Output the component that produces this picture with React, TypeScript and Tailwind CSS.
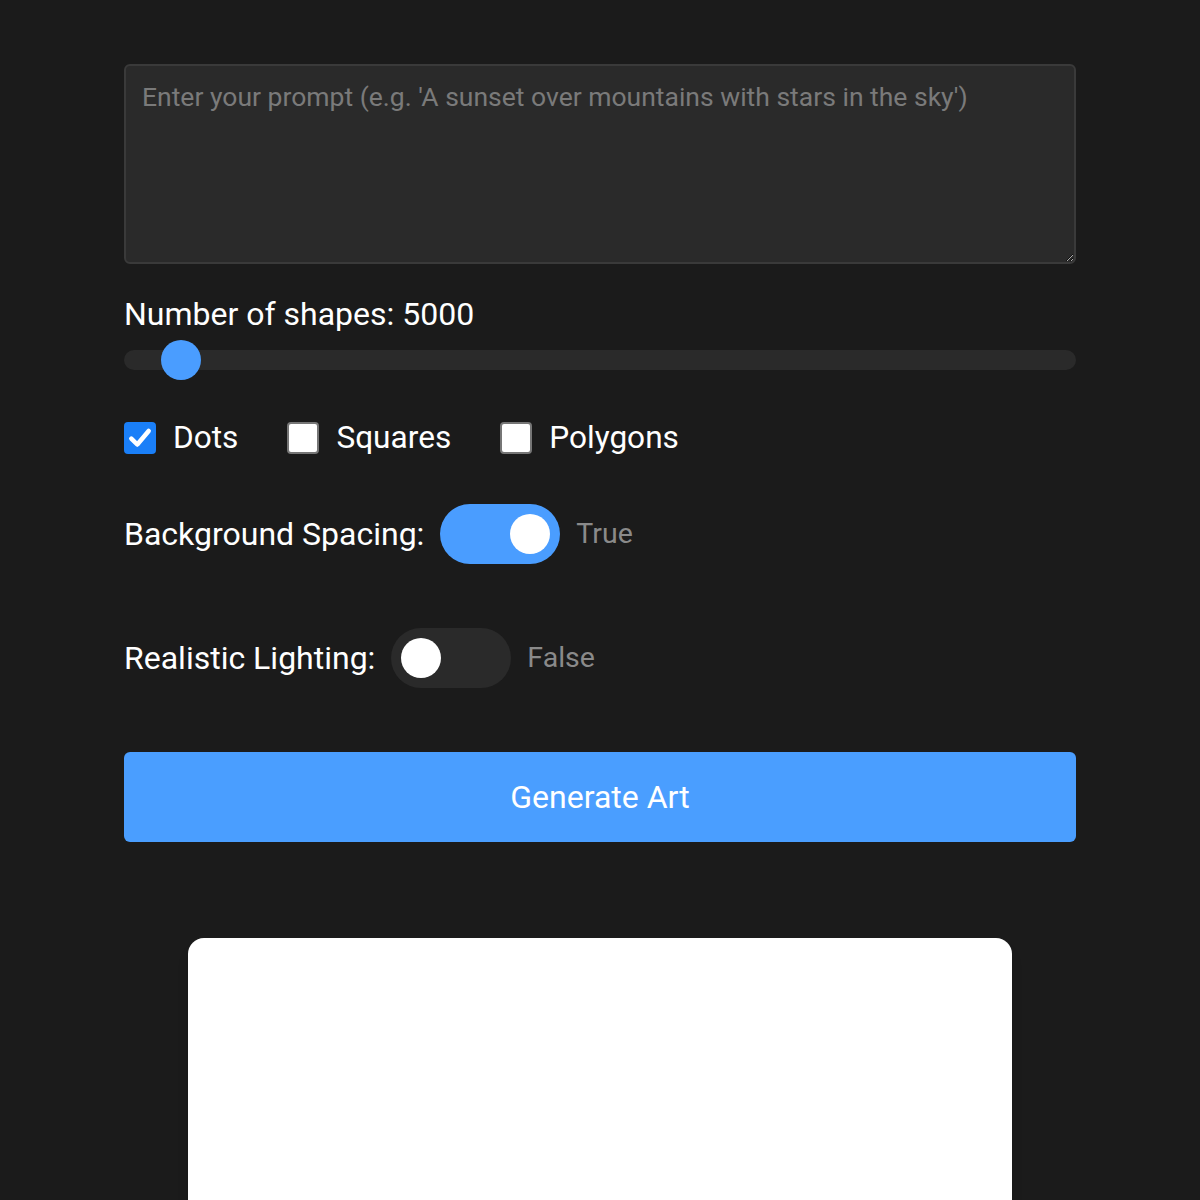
import React, { useState } from 'react';

const font = { fontFamily: 'Roboto, "Liberation Sans", sans-serif' };

const Check = ({ checked, label }: { checked: boolean; label: string }) => (
    <label className="flex items-center gap-[17px]">
        {checked ? (
            <span className="w-8 h-8 rounded-[4px] bg-[#1a7ff8] flex items-center justify-center">
                <svg width="26" height="26" viewBox="0 0 24 24" fill="none">
                    <path d="M4 12.5 L9.5 18 L20 5.5" stroke="white" strokeWidth="4.2" strokeLinecap="round" strokeLinejoin="round" />
                </svg>
            </span>
        ) : (
            <span className="w-8 h-8 rounded-[4px] bg-white border-2 border-[#767676]" />
        )}
        <span className="text-[31.6px] text-white leading-none">{label}</span>
    </label>
);

const Toggle = ({ label, on }: { label: string; on: boolean }) => (
    <div className="flex items-center">
        <span className="text-[32px] text-white">{label}</span>
        <div className={`ml-4 w-[120px] h-[60px] rounded-full flex items-center px-[10px] ${on ? 'bg-[#4a9dff] justify-end' : 'bg-[#2a2a2a] justify-start'}`}>
            <span className="w-10 h-10 rounded-full bg-white" />
        </div>
        <span className="ml-4 text-[28.5px] text-[#8a8a8a]">{on ? 'True' : 'False'}</span>
    </div>
);

export default function App() {
    const [shapes] = useState(5000);
    const pct = (shapes - 1000) / 99000;

    return (
        <div className="min-h-[1200px] bg-[#1b1b1b] overflow-hidden" style={font}>
            <div className="w-[952px] mx-auto pt-16 flex flex-col">
                <textarea
                    className="w-full h-[200px] bg-[#2a2a2a] border-2 border-[#3a3a3a] rounded-md px-4 py-[11px] text-[26.5px] text-white placeholder:text-[#7a7a7a] outline-none"
                    placeholder="Enter your prompt (e.g. 'A sunset over mountains with stars in the sky')"
                />

                <div className="mt-[30px] text-[32px] text-white leading-[40px]">Number of shapes: {shapes}</div>
                <div className="mt-4 relative h-5 rounded-full bg-[#2a2a2a]">
                    <span
                        className="absolute top-1/2 -translate-y-1/2 w-10 h-10 rounded-full bg-[#4a9dff]"
                        style={{ left: `${pct * 912}px` }}
                    />
                </div>

                <div className="mt-[52px] flex items-center gap-[49px]">
                    <Check checked label="Dots" />
                    <Check checked={false} label="Squares" />
                    <Check checked={false} label="Polygons" />
                </div>

                <div className="mt-[50px] flex flex-col gap-16">
                    <Toggle label="Background Spacing:" on />
                    <Toggle label="Realistic Lighting:" on={false} />
                </div>

                <button className="mt-16 h-[90px] w-full rounded-md bg-[#4a9eff] text-white text-[32px]">
                    Generate Art
                </button>

                <div className="mt-24 mx-auto w-[824px] h-[824px] bg-white rounded-2xl shadow-lg" />
            </div>
        </div>
    );
}
